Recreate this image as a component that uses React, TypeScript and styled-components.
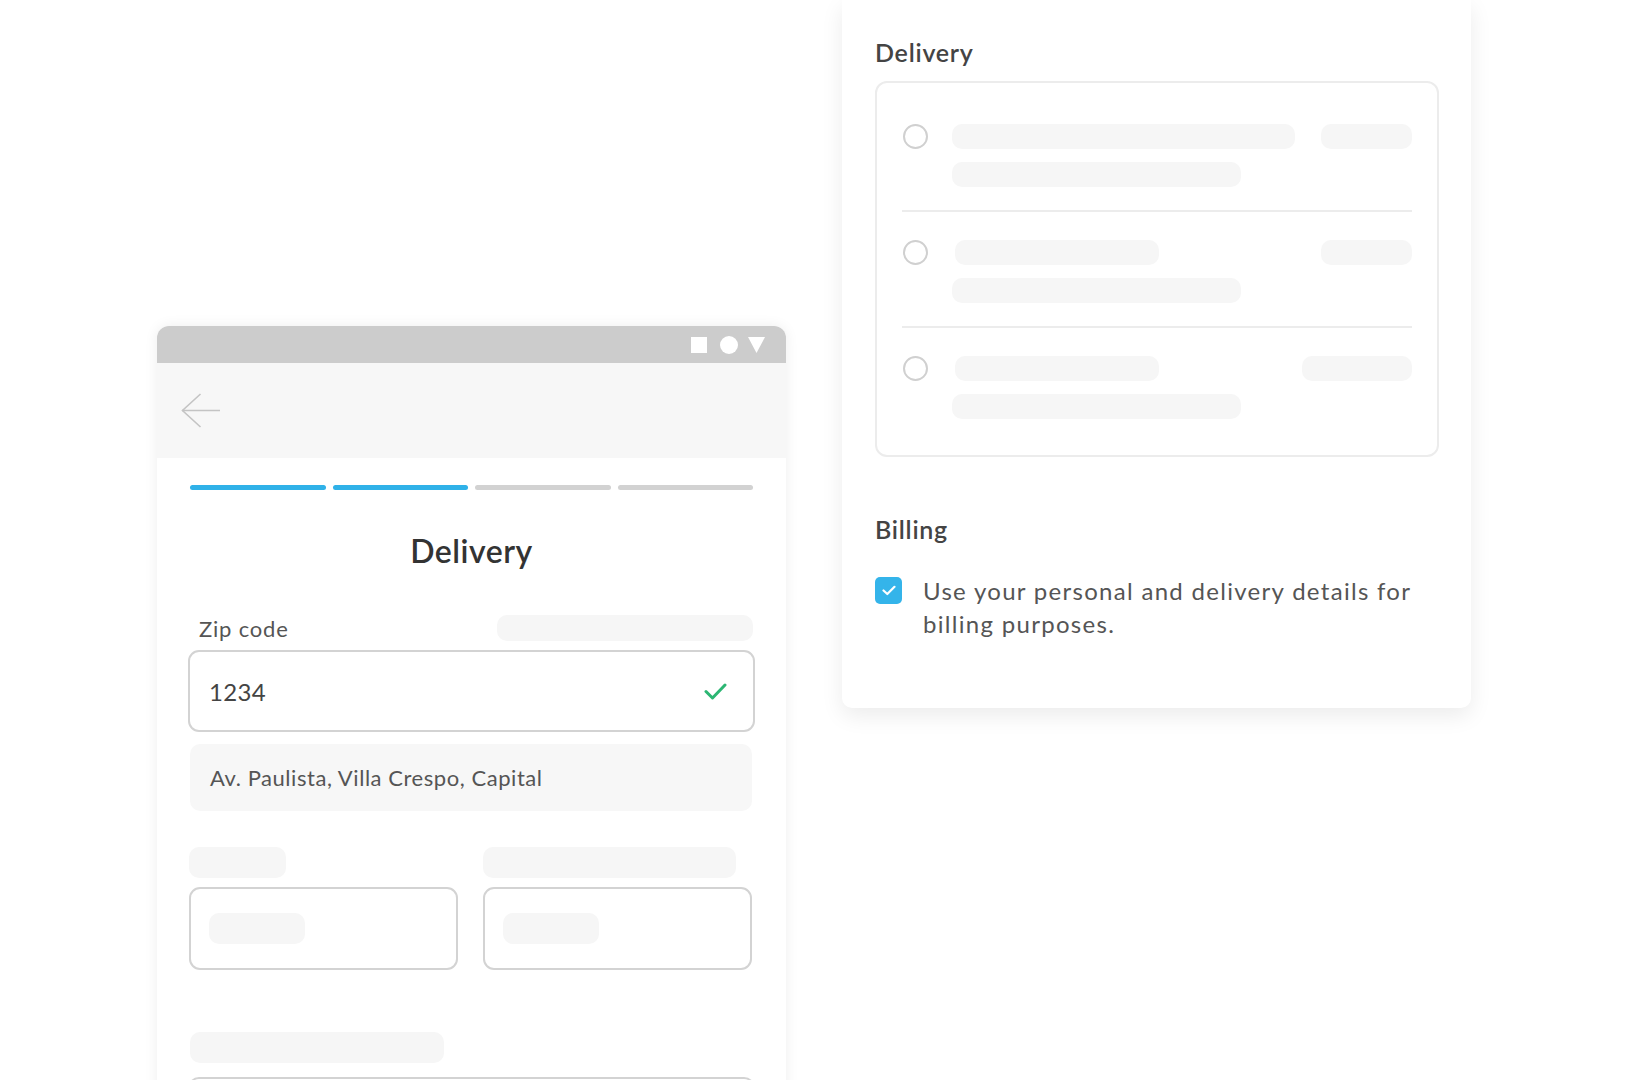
import React from "react";
import styled, { createGlobalStyle } from "styled-components";

const Global = createGlobalStyle`
  html, body { margin: 0; padding: 0; background: #ffffff; }
  body { font-family: "Lato", "Noto Sans", sans-serif; color: #444; overflow: hidden; }
  * { box-sizing: border-box; }
`;

const Page = styled.div`
  display: flex;
  align-items: flex-start;
  gap: 56px;
  padding-left: 157px;
  height: 1080px;
  overflow: hidden;
`;

const Phone = styled.div`
  width: 629px;
  margin-top: 326px;
  background: #ffffff;
  border-radius: 12px 12px 0 0;
  box-shadow: 0 0 14px rgba(0, 0, 0, 0.07);
  display: flex;
  flex-direction: column;
`;

const StatusBar = styled.div`
  height: 37px;
  background: #cccccc;
  border-radius: 12px 12px 0 0;
  display: flex;
  align-items: center;
  justify-content: flex-end;
  padding-right: 21px;
`;

const StatusIcon = styled.svg<{ $gap?: number }>`
  display: block;
  margin-left: ${(p) => p.$gap ?? 0}px;
`;

const AppHeader = styled.div`
  height: 95px;
  background: #f7f7f7;
  display: flex;
  align-items: center;
  padding-left: 24px;
`;

const Content = styled.div`
  padding: 27px 33px 0 33px;
  display: flex;
  flex-direction: column;
`;

const Progress = styled.div`
  display: grid;
  grid-template-columns: repeat(4, 1fr);
  gap: 7px;
`;

const Segment = styled.div<{ $active?: boolean }>`
  height: 5px;
  border-radius: 3px;
  background: ${(p) => (p.$active ? "#2fb1e8" : "#d2d2d2")};
`;

const Title = styled.h1`
  margin: 41px 0 0 0;
  text-align: center;
  font-size: 32px;
  line-height: 40px;
  font-weight: 600;
  letter-spacing: 0.5px;
  color: #333;
`;

const LabelRow = styled.div`
  margin-top: 44px;
  display: flex;
  align-items: center;
  justify-content: space-between;
  height: 26px;
`;

const FieldLabel = styled.span`
  padding-left: 9px;
  font-size: 22px;
  letter-spacing: 0.8px;
  color: #555;
`;

const Skeleton = styled.div<{ $w: number; $h?: number }>`
  width: ${(p) => p.$w}px;
  height: ${(p) => p.$h ?? 25}px;
  border-radius: 10px;
  background: #f6f6f6;
  flex-shrink: 0;
`;

const InputBox = styled.div<{ $mt?: number }>`
  margin: ${(p) => p.$mt ?? 0}px -2px 0 -2px;
  height: 82px;
  border: 2px solid #d3d3d3;
  border-radius: 11px;
  display: flex;
  align-items: center;
  justify-content: space-between;
  padding: 0 26px 0 19px;
`;

const InputValue = styled.span`
  font-size: 24px;
  letter-spacing: 0.3px;
  color: #444;
`;

const AddressBox = styled.div`
  margin-top: 12px;
  height: 67px;
  width: 562px;
  background: #f7f7f7;
  border-radius: 10px;
  display: flex;
  align-items: center;
  padding-left: 20px;
  font-size: 22px;
  letter-spacing: 0.55px;
  color: #555;
`;

const TwoCols = styled.div<{ $mt: number }>`
  margin-top: ${(p) => p.$mt}px;
  margin-left: -1px;
  display: grid;
  grid-template-columns: 269px 269px;
  column-gap: 25px;
`;

const SmallInput = styled.div`
  height: 83px;
  border: 2px solid #d3d3d3;
  border-radius: 11px;
  display: flex;
  align-items: center;
  padding-left: 18px;
`;

const BottomSkeletonWrap = styled.div`
  margin-top: 62px;
`;

const Card = styled.div`
  width: 629px;
  background: #ffffff;
  border-radius: 0 0 10px 10px;
  box-shadow: 0 8px 22px rgba(0, 0, 0, 0.08);
  padding: 37px 32px 68px 33px;
`;

const SectionTitle = styled.h2<{ $mt?: number }>`
  margin: ${(p) => p.$mt ?? 0}px 0 0 0;
  font-size: 25px;
  line-height: 30px;
  font-weight: 600;
  letter-spacing: 0.75px;
  color: #444;
`;

const OptionsBox = styled.div`
  margin-top: 14px;
  border: 2px solid #ececec;
  border-radius: 12px;
  padding: 13px 25px 13px 25px;
`;

const OptionRow = styled.div<{ $divider?: boolean }>`
  display: flex;
  align-items: flex-start;
  gap: 24px;
  padding: 28px 0 23px 1px;
  border-bottom: ${(p) => (p.$divider ? "2px solid #ececec" : "none")};
`;

const Radio = styled.div`
  width: 25px;
  height: 25px;
  border-radius: 50%;
  border: 2.5px solid #d0d0d0;
  flex-shrink: 0;
`;

const OptionBody = styled.div`
  flex: 1;
  display: flex;
  flex-direction: column;
  gap: 13px;
`;

const OptionTop = styled.div<{ $indent?: number }>`
  display: flex;
  justify-content: space-between;
  padding-left: ${(p) => p.$indent ?? 0}px;
`;

const CheckRow = styled.div`
  margin-top: 30px;
  display: flex;
  align-items: flex-start;
  gap: 21px;
`;

const CheckBox = styled.div`
  width: 27px;
  height: 27px;
  margin-top: 3px;
  border-radius: 5px;
  background: #34b4ea;
  display: flex;
  align-items: center;
  justify-content: center;
  flex-shrink: 0;
`;

const CheckText = styled.p`
  margin: 0;
  font-size: 24px;
  line-height: 33px;
  letter-spacing: 1.3px;
  color: #555;
  max-width: 530px;
`;

const BackArrow = () => (
  <svg width="40" height="36" viewBox="0 0 40 36" fill="none">
    <path d="M1 17.5H39" stroke="#c4c4c4" strokeWidth="1.6" />
    <path d="M19.5 1L1.5 17.5L19.5 34" stroke="#c4c4c4" strokeWidth="1.6" />
  </svg>
);

const StatusIcons = () => (
  <>
    <StatusIcon width="16" height="16" viewBox="0 0 16 16">
      <rect width="16" height="16" fill="#fff" />
    </StatusIcon>
    <StatusIcon $gap={13} width="18" height="18" viewBox="0 0 18 18">
      <circle cx="9" cy="9" r="9" fill="#fff" />
    </StatusIcon>
    <StatusIcon $gap={10} width="17" height="16" viewBox="0 0 17 16">
      <path d="M0 0H17L8.5 16Z" fill="#fff" />
    </StatusIcon>
  </>
);

const GreenCheck = () => (
  <svg width="23" height="17" viewBox="0 0 23 17" fill="none">
    <path d="M2 8.5L8.5 15L21 2" stroke="#2cb673" strokeWidth="3" strokeLinecap="round" strokeLinejoin="round" />
  </svg>
);

const WhiteCheck = () => (
  <svg width="14" height="11" viewBox="0 0 14 11" fill="none">
    <path d="M1.5 5.5L5.3 9L12.5 1.8" stroke="#fff" strokeWidth="2.2" strokeLinecap="round" strokeLinejoin="round" />
  </svg>
);

const options = [
  { top: 343, indent: 0, right: 91, bottom: 289 },
  { top: 204, indent: 3, right: 91, bottom: 289 },
  { top: 204, indent: 3, right: 110, bottom: 289 },
];

export default function App() {
  return (
    <>
      <Global />
      <Page>
        <Phone>
          <StatusBar>
            <StatusIcons />
          </StatusBar>
          <AppHeader>
            <BackArrow />
          </AppHeader>
          <Content>
            <Progress>
              <Segment $active />
              <Segment $active />
              <Segment />
              <Segment />
            </Progress>
            <Title>Delivery</Title>
            <LabelRow>
              <FieldLabel>Zip code</FieldLabel>
              <Skeleton $w={256} $h={26} />
            </LabelRow>
            <InputBox $mt={9}>
              <InputValue>1234</InputValue>
              <GreenCheck />
            </InputBox>
            <AddressBox>Av. Paulista, Villa Crespo, Capital</AddressBox>
            <TwoCols $mt={36}>
              <Skeleton $w={97} $h={31} />
              <Skeleton $w={253} $h={31} />
            </TwoCols>
            <TwoCols $mt={9}>
              <SmallInput>
                <Skeleton $w={96} $h={31} />
              </SmallInput>
              <SmallInput>
                <Skeleton $w={96} $h={31} />
              </SmallInput>
            </TwoCols>
            <BottomSkeletonWrap>
              <Skeleton $w={254} $h={31} />
            </BottomSkeletonWrap>
            <InputBox $mt={14} />
          </Content>
        </Phone>
        <Card>
          <SectionTitle>Delivery</SectionTitle>
          <OptionsBox>
            {options.map((o, i) => (
              <OptionRow key={i} $divider={i < options.length - 1}>
                <Radio />
                <OptionBody>
                  <OptionTop $indent={o.indent}>
                    <Skeleton $w={o.top} />
                    <Skeleton $w={o.right} />
                  </OptionTop>
                  <Skeleton $w={o.bottom} />
                </OptionBody>
              </OptionRow>
            ))}
          </OptionsBox>
          <SectionTitle $mt={57}>Billing</SectionTitle>
          <CheckRow>
            <CheckBox>
              <WhiteCheck />
            </CheckBox>
            <CheckText>Use your personal and delivery details for billing purposes.</CheckText>
          </CheckRow>
        </Card>
      </Page>
    </>
  );
}
